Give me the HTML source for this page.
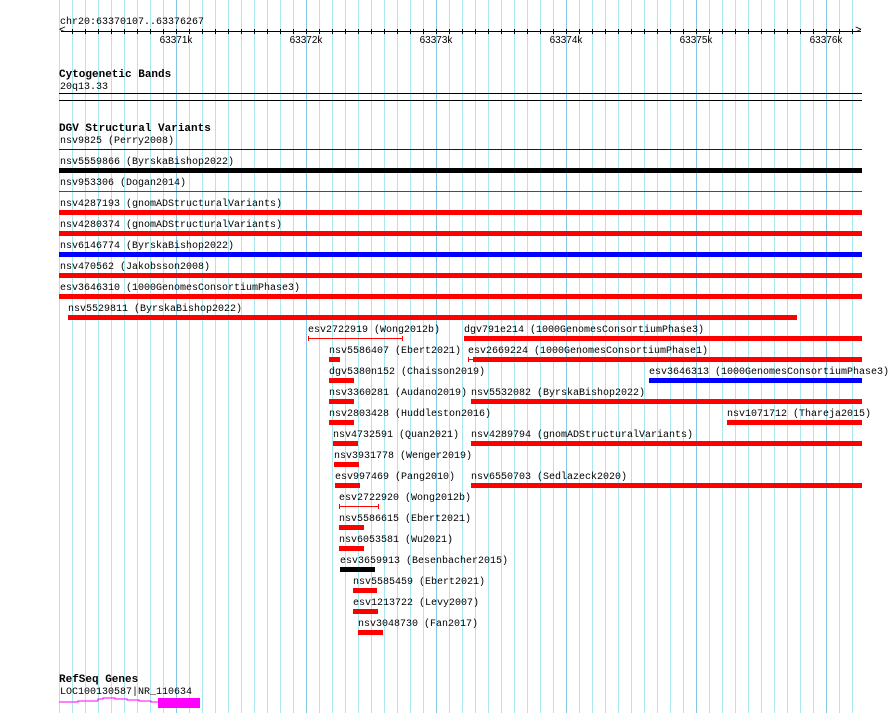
<!DOCTYPE html>
<html><head><meta charset="utf-8"><style>
body{margin:0;width:890px;height:713px;background:#fff;position:relative;overflow:hidden;font-family:"Liberation Mono","DejaVu Sans Mono",monospace;font-size:10px;color:#000}
div{position:absolute}
.grid{left:59px;top:0;width:800px;height:713px;background:repeating-linear-gradient(to right,#a8e8ee 0 1px,transparent 1px 13px)}
.maj{top:0;width:1px;height:713px;background:#86c6e6}
.t{line-height:12px;white-space:pre;margin-top:2px}
.b{font-weight:bold;font-size:11px;margin-top:1px}
.bar{height:5px;background:#f00}
.k{position:absolute;top:35px;font-family:"Liberation Sans",sans-serif;font-size:10px;width:40px;text-align:center;line-height:12px}
</style></head><body>
<div class="grid"></div>
<div class="maj" style="left:176px"></div><div class="maj" style="left:306px"></div><div class="maj" style="left:436px"></div><div class="maj" style="left:566px"></div><div class="maj" style="left:696px"></div><div class="maj" style="left:826px"></div>

<div class="t" style="left:60px;top:15px">chr20:63370107..63376267</div>
<div style="left:61px;top:31px;width:800px;height:1px;background:#000"></div>
<div style="left:62px;top:29px;width:797px;height:5px;background:repeating-linear-gradient(to right,transparent 0 10px,#000 10px 11px,transparent 11px 13px)"></div>
<div class="t" style="left:59px;top:23px;font-size:11px">&lt;</div>
<div class="t" style="left:855px;top:23px;font-size:11px">&gt;</div>
<div class="k" style="left:156px">63371k</div><div class="k" style="left:286px">63372k</div><div class="k" style="left:416px">63373k</div><div class="k" style="left:546px">63374k</div><div class="k" style="left:676px">63375k</div><div class="k" style="left:806px">63376k</div>

<div class="t b" style="left:59px;top:68px">Cytogenetic Bands</div>
<div class="t" style="left:60px;top:80px">20q13.33</div>
<div style="left:59px;top:93px;width:803px;height:1px;background:#000"></div>
<div style="left:59px;top:100px;width:803px;height:1px;background:#000"></div>

<div class="t b" style="left:59px;top:122px">DGV Structural Variants</div>
<div class="t" style="left:60px;top:134px">nsv9825 (Perry2008)</div>
<div style="left:59px;top:149px;width:803px;height:1px;background:#00f"></div>
<div class="t" style="left:60px;top:155px">nsv5559866 (ByrskaBishop2022)</div>
<div class="bar" style="left:59px;top:168px;width:803px;background:#000"></div>
<div class="t" style="left:60px;top:176px">nsv953306 (Dogan2014)</div>
<div style="left:59px;top:191px;width:803px;height:1px;background:#f00"></div>
<div class="t" style="left:60px;top:197px">nsv4287193 (gnomADStructuralVariants)</div>
<div class="bar" style="left:59px;top:210px;width:803px"></div>
<div class="t" style="left:60px;top:218px">nsv4280374 (gnomADStructuralVariants)</div>
<div class="bar" style="left:59px;top:231px;width:803px"></div>
<div class="t" style="left:60px;top:239px">nsv6146774 (ByrskaBishop2022)</div>
<div class="bar" style="left:59px;top:252px;width:803px;background:#00f"></div>
<div class="t" style="left:60px;top:260px">nsv470562 (Jakobsson2008)</div>
<div class="bar" style="left:59px;top:273px;width:803px"></div>
<div class="t" style="left:60px;top:281px">esv3646310 (1000GenomesConsortiumPhase3)</div>
<div class="bar" style="left:59px;top:294px;width:803px"></div>
<div class="t" style="left:68px;top:302px">nsv5529811 (ByrskaBishop2022)</div>
<div class="bar" style="left:68px;top:315px;width:729px"></div>

<div class="t" style="left:308px;top:323px">esv2722919 (Wong2012b)</div>
<div style="left:308px;top:338px;width:95px;height:1px;background:#f00"></div>
<div style="left:308px;top:336px;width:1px;height:5px;background:#f00"></div>
<div style="left:402px;top:336px;width:1px;height:5px;background:#f00"></div>
<div class="t" style="left:464px;top:323px">dgv791e214 (1000GenomesConsortiumPhase3)</div>
<div class="bar" style="left:464px;top:336px;width:398px"></div>

<div class="t" style="left:329px;top:344px">nsv5586407 (Ebert2021)</div>
<div class="bar" style="left:329px;top:357px;width:11px"></div>
<div class="t" style="left:468px;top:344px">esv2669224 (1000GenomesConsortiumPhase1)</div>
<div style="left:468px;top:359px;width:5px;height:1px;background:#f00"></div>
<div style="left:468px;top:357px;width:1px;height:5px;background:#f00"></div>
<div class="bar" style="left:473px;top:357px;width:389px"></div>

<div class="t" style="left:329px;top:365px">dgv5380n152 (Chaisson2019)</div>
<div class="bar" style="left:329px;top:378px;width:25px"></div>
<div class="t" style="left:649px;top:365px">esv3646313 (1000GenomesConsortiumPhase3)</div>
<div class="bar" style="left:649px;top:378px;width:213px;background:#00f"></div>

<div class="t" style="left:329px;top:386px">nsv3360281 (Audano2019)</div>
<div class="bar" style="left:329px;top:399px;width:25px"></div>
<div class="t" style="left:471px;top:386px">nsv5532082 (ByrskaBishop2022)</div>
<div class="bar" style="left:471px;top:399px;width:391px"></div>

<div class="t" style="left:329px;top:407px">nsv2803428 (Huddleston2016)</div>
<div class="bar" style="left:329px;top:420px;width:25px"></div>
<div class="t" style="left:727px;top:407px">nsv1071712 (Thareja2015)</div>
<div class="bar" style="left:727px;top:420px;width:135px"></div>

<div class="t" style="left:333px;top:428px">nsv4732591 (Quan2021)</div>
<div class="bar" style="left:333px;top:441px;width:25px"></div>
<div class="t" style="left:471px;top:428px">nsv4289794 (gnomADStructuralVariants)</div>
<div class="bar" style="left:471px;top:441px;width:391px"></div>

<div class="t" style="left:334px;top:449px">nsv3931778 (Wenger2019)</div>
<div class="bar" style="left:334px;top:462px;width:25px"></div>

<div class="t" style="left:335px;top:470px">esv997469 (Pang2010)</div>
<div class="bar" style="left:335px;top:483px;width:25px"></div>
<div class="t" style="left:471px;top:470px">nsv6550703 (Sedlazeck2020)</div>
<div class="bar" style="left:471px;top:483px;width:391px"></div>

<div class="t" style="left:339px;top:491px">esv2722920 (Wong2012b)</div>
<div style="left:339px;top:506px;width:40px;height:1px;background:#f00"></div>
<div style="left:339px;top:504px;width:1px;height:5px;background:#f00"></div>
<div style="left:378px;top:504px;width:1px;height:5px;background:#f00"></div>

<div class="t" style="left:339px;top:512px">nsv5586615 (Ebert2021)</div>
<div class="bar" style="left:339px;top:525px;width:25px"></div>
<div class="t" style="left:339px;top:533px">nsv6053581 (Wu2021)</div>
<div class="bar" style="left:339px;top:546px;width:25px"></div>
<div class="t" style="left:340px;top:554px">esv3659913 (Besenbacher2015)</div>
<div class="bar" style="left:340px;top:567px;width:35px;background:#000"></div>
<div class="t" style="left:353px;top:575px">nsv5585459 (Ebert2021)</div>
<div class="bar" style="left:353px;top:588px;width:24px"></div>
<div class="t" style="left:353px;top:596px">esv1213722 (Levy2007)</div>
<div class="bar" style="left:353px;top:609px;width:25px"></div>
<div class="t" style="left:358px;top:617px">nsv3048730 (Fan2017)</div>
<div class="bar" style="left:358px;top:630px;width:25px"></div>

<div class="t b" style="left:59px;top:673px">RefSeq Genes</div>
<div class="t" style="left:60px;top:685px">LOC100130587|NR_110634</div>
<svg style="position:absolute;left:0;top:0" width="890" height="713"><polyline points="59,702 78,702 78,701 98,701 98,699 103,699 103,698 115,698 115,699 127,699 127,700 139,700 139,701 151,701 151,702 158,702" fill="none" stroke="#f0f" stroke-width="1"/><rect x="158" y="698" width="42" height="10" fill="#f0f"/></svg>
</body></html>
